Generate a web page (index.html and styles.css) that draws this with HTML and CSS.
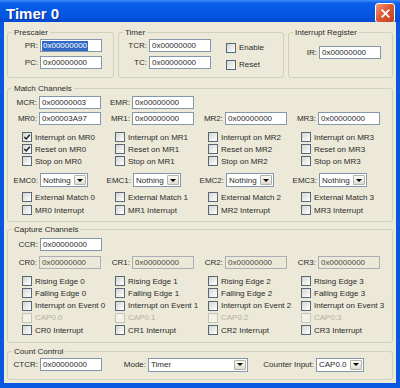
FILE: index.html
```html
<!DOCTYPE html>
<html lang="en">
<head>
  <meta charset="UTF-8" />
  <title>Timer 0</title>
  <link rel="stylesheet" href="styles.css">
</head>
<body>
  <div class="window">
    <div class="titlebar">
      <span class="title">Timer 0</span>
      <span class="close">
        <svg width="11" height="11" viewBox="0 0 10 10"><path d="M2 2 L8 8 M8 2 L2 8" stroke="#fff" stroke-width="1.7" stroke-linecap="round"/></svg>
      </span>
    </div>

    <div class="client">
      <!-- Fila superior -->
      <div class="top-row">
        <div class="group prescaler">
          <span class="caption">Prescaler</span>
          <div class="stack">
            <div class="field"><span class="lbl">PR:</span><span class="edit"><span class="sel">0x00000000</span></span></div>
            <div class="field"><span class="lbl">PC:</span><span class="edit">0x00000000</span></div>
          </div>
        </div>

        <div class="group timer">
          <span class="caption">Timer</span>
          <div class="stack">
            <div class="field"><span class="lbl narrow">TCR:</span><span class="edit">0x00000000</span></div>
            <div class="field"><span class="lbl narrow">TC:</span><span class="edit">0x00000000</span></div>
          </div>
          <div class="timer-checks">
            <div class="check"><span class="cb"></span>Enable</div>
            <div class="check"><span class="cb"></span>Reset</div>
          </div>
        </div>

        <div class="group intreg">
          <span class="caption">Interrupt Register</span>
          <div class="field"><span class="lbl narrow">IR:</span><span class="edit">0x00000000</span></div>
        </div>
      </div>

      <!-- Canales de match -->
      <div class="group match">
        <span class="caption">Match Channels</span>
        <div class="grid4 regs">
          <div class="field"><span class="lbl">MCR:</span><span class="edit">0x00000003</span></div>
          <div class="field"><span class="lbl">EMR:</span><span class="edit">0x00000000</span></div>
          <div></div>
          <div></div>
          <div class="field"><span class="lbl">MR0:</span><span class="edit">0x00003A97</span></div>
          <div class="field"><span class="lbl">MR1:</span><span class="edit">0x00000000</span></div>
          <div class="field"><span class="lbl">MR2:</span><span class="edit">0x00000000</span></div>
          <div class="field"><span class="lbl">MR3:</span><span class="edit">0x00000000</span></div>
        </div>
        <div class="grid4 checks gap6">
          <div class="check ind"><span class="cb on"><svg width="8" height="8" viewBox="0 0 8 8"><path d="M1.3 4 L3.2 6 L6.8 1.8" fill="none" stroke="#222" stroke-width="1.5"/></svg></span>Interrupt on MR0</div>
          <div class="check ind"><span class="cb"></span>Interrupt on MR1</div>
          <div class="check ind"><span class="cb"></span>Interrupt on MR2</div>
          <div class="check ind"><span class="cb"></span>Interrupt on MR3</div>
          <div class="check ind"><span class="cb on"><svg width="8" height="8" viewBox="0 0 8 8"><path d="M1.3 4 L3.2 6 L6.8 1.8" fill="none" stroke="#222" stroke-width="1.5"/></svg></span>Reset on MR0</div>
          <div class="check ind"><span class="cb"></span>Reset on MR1</div>
          <div class="check ind"><span class="cb"></span>Reset on MR2</div>
          <div class="check ind"><span class="cb"></span>Reset on MR3</div>
          <div class="check ind"><span class="cb"></span>Stop on MR0</div>
          <div class="check ind"><span class="cb"></span>Stop on MR1</div>
          <div class="check ind"><span class="cb"></span>Stop on MR2</div>
          <div class="check ind"><span class="cb"></span>Stop on MR3</div>
        </div>
        <div class="grid4 emc">
          <div class="field tall"><span class="lbl">EMC0:</span><span class="combo small">Nothing<span class="arrow"></span></span></div>
          <div class="field tall"><span class="lbl">EMC1:</span><span class="combo small">Nothing<span class="arrow"></span></span></div>
          <div class="field tall"><span class="lbl">EMC2:</span><span class="combo small">Nothing<span class="arrow"></span></span></div>
          <div class="field tall"><span class="lbl">EMC3:</span><span class="combo small">Nothing<span class="arrow"></span></span></div>
        </div>
        <div class="grid4 checks ext">
          <div class="check ind"><span class="cb"></span>External Match 0</div>
          <div class="check ind"><span class="cb"></span>External Match 1</div>
          <div class="check ind"><span class="cb"></span>External Match 2</div>
          <div class="check ind"><span class="cb"></span>External Match 3</div>
          <div class="check ind"><span class="cb"></span>MR0 Interrupt</div>
          <div class="check ind"><span class="cb"></span>MR1 Interrupt</div>
          <div class="check ind"><span class="cb"></span>MR2 Interrupt</div>
          <div class="check ind"><span class="cb"></span>MR3 Interrupt</div>
        </div>
      </div>

      <!-- Canales de captura -->
      <div class="group capture">
        <span class="caption">Capture Channels</span>
        <div class="field"><span class="lbl">CCR:</span><span class="edit">0x00000000</span></div>
        <div class="grid4 cr-row">
          <div class="field"><span class="lbl">CR0:</span><span class="edit ro">0x00000000</span></div>
          <div class="field"><span class="lbl">CR1:</span><span class="edit ro">0x00000000</span></div>
          <div class="field"><span class="lbl">CR2:</span><span class="edit ro">0x00000000</span></div>
          <div class="field"><span class="lbl">CR3:</span><span class="edit ro">0x00000000</span></div>
        </div>
        <div class="grid4 checks cap gap6">
          <div class="check ind"><span class="cb"></span>Rising Edge 0</div>
          <div class="check ind"><span class="cb"></span>Rising Edge 1</div>
          <div class="check ind"><span class="cb"></span>Rising Edge 2</div>
          <div class="check ind"><span class="cb"></span>Rising Edge 3</div>
          <div class="check ind"><span class="cb"></span>Falling Edge 0</div>
          <div class="check ind"><span class="cb"></span>Falling Edge 1</div>
          <div class="check ind"><span class="cb"></span>Falling Edge 2</div>
          <div class="check ind"><span class="cb"></span>Falling Edge 3</div>
          <div class="check ind"><span class="cb"></span>Interrupt on Event 0</div>
          <div class="check ind"><span class="cb"></span>Interrupt on Event 1</div>
          <div class="check ind"><span class="cb"></span>Interrupt on Event 2</div>
          <div class="check ind"><span class="cb"></span>Interrupt on Event 3</div>
          <div class="check ind dis"><span class="cb"></span>CAP0.0</div>
          <div class="check ind dis"><span class="cb"></span>CAP0.1</div>
          <div class="check ind dis"><span class="cb"></span>CAP0.2</div>
          <div class="check ind dis"><span class="cb"></span>CAP0.3</div>
          <div class="check ind"><span class="cb"></span>CR0 Interrupt</div>
          <div class="check ind"><span class="cb"></span>CR1 Interrupt</div>
          <div class="check ind"><span class="cb"></span>CR2 Interrupt</div>
          <div class="check ind"><span class="cb"></span>CR3 Interrupt</div>
        </div>
      </div>

      <!-- Control de conteo -->
      <div class="group count">
        <span class="caption">Count Control</span>
        <div class="field"><span class="lbl">CTCR:</span><span class="edit">0x00000000</span></div>
        <div class="field"><span class="lbl mode">Mode:</span><span class="combo wide">Timer<span class="arrow"></span></span></div>
        <div class="field"><span class="lbl counter">Counter Input:</span><span class="combo small">CAP0.0<span class="arrow"></span></span></div>
      </div>
    </div>
  </div>
</body>
</html>
```

FILE: styles.css
```css
:root {
  --face: #ece9d8;
  --frame: #0a58df;
  --group-line: #d0d0bf;
  --edit-border: #8497ab;
  --text: #2b2b2b;
}

* {
  box-sizing: border-box;
}

body {
  margin: 0;
  font-family: 'Liberation Sans', Arial, sans-serif;
  font-size: 8px;
  color: var(--text);
}

.window {
  width: 400px;
  height: 388px;
  background: var(--frame);
  display: flex;
  flex-direction: column;
}

.titlebar {
  height: 22px;
  flex: none;
  display: flex;
  padding: 0 5px 0 6px;
  background: linear-gradient(to bottom, #3f8cf8 0%, #0a5ee8 14%, #0558e6 50%, #0453dc 80%, #0449cc 100%);
}

.title {
  font-size: 15px;
  font-weight: bold;
  color: #fff;
  line-height: 28px;
  text-shadow: 1px 1px #0c2f9a;
}

.close {
  margin-left: auto;
  margin-top: 3px;
  width: 20px;
  height: 20px;
  border: 1px solid #fff;
  border-radius: 3px;
  background: linear-gradient(135deg, #f09a7c 0%, #df5a33 45%, #c2401e 100%);
  display: flex;
  align-items: center;
  justify-content: center;
}

.client {
  flex: 1;
  margin: 0 4px 5px;
  padding: 0 3px;
  background: var(--face);
}

/* Cajas de grupo */
.group {
  position: relative;
  border: 1px solid var(--group-line);
  border-radius: 3px;
}

.caption {
  position: absolute;
  top: -6px;
  left: 4px;
  padding: 0 2px;
  line-height: 11px;
  background: var(--face);
  white-space: nowrap;
}

.top-row {
  display: flex;
  gap: 4px;
  margin-top: 10px;
}

.prescaler {
  width: 107px;
  height: 46px;
  padding-top: 6px;
}

.timer {
  width: 166px;
  height: 46px;
  padding-top: 6px;
  display: flex;
}

.intreg {
  width: 105px;
  height: 46px;
  padding-top: 13px;
}

.stack {
  display: flex;
  flex-direction: column;
  gap: 4px;
}

.timer-checks {
  display: flex;
  flex-direction: column;
  gap: 4px;
  margin: 2px 0 0 15px;
}

.timer-checks .check {
  height: 13px;
}

/* Campos */
.field {
  display: flex;
  align-items: center;
  height: 13px;
}

.field.tall {
  height: 14px;
}

.lbl {
  width: 30px;
  margin-right: 2px;
  text-align: right;
  white-space: nowrap;
}

.lbl.narrow {
  width: 28px;
}

.lbl.mode {
  width: 44px;
}

.lbl.counter {
  width: 66px;
}

.edit {
  width: 62px;
  height: 13px;
  flex: none;
  border: 1px solid var(--edit-border);
  background: #fff;
  padding: 0 2px;
  line-height: 11px;
  white-space: nowrap;
  overflow: hidden;
}

.edit.ro {
  background: var(--face);
  border-color: #a8afb6;
  color: #4a4a4a;
}

.sel {
  display: inline-block;
  background: #316ac5;
  color: #fff;
  line-height: 10px;
  margin-left: -1px;
  padding: 0 1px;
}

.combo {
  height: 14px;
  flex: none;
  display: flex;
  align-items: center;
  border: 1px solid var(--edit-border);
  background: #fff;
  padding-left: 2px;
  white-space: nowrap;
}

.combo.small {
  width: 48px;
}

.combo.wide {
  width: 100px;
}

.arrow {
  margin-left: auto;
  margin-right: 1px;
  width: 12px;
  height: 10px;
  border: 1px solid #b2b2a6;
  border-radius: 1px;
  background: linear-gradient(to bottom, #fbfbf9, #dedcd2);
  display: flex;
  align-items: center;
  justify-content: center;
}

.arrow::after {
  content: "";
  border-left: 3px solid transparent;
  border-right: 3px solid transparent;
  border-top: 3px solid #000;
}

/* Casillas */
.check {
  display: flex;
  align-items: center;
  height: 12px;
  white-space: nowrap;
}

.check.ind {
  padding-left: 14px;
}

.check.dis {
  color: #b3b0a2;
}

.cb {
  width: 10px;
  height: 10px;
  flex: none;
  margin-right: 3px;
  border: 1px solid #56677a;
  background: linear-gradient(135deg, #d6d6ce, #ffffff);
  display: flex;
  align-items: center;
  justify-content: center;
}

.check.dis .cb {
  border-color: #c6c4b7;
  background: #f2f1ea;
}

/* Canales */
.grid4 {
  display: grid;
  grid-template-columns: repeat(4, 93px);
}

.match {
  height: 134px;
  margin-top: 10px;
  padding-top: 7px;
}

.regs {
  row-gap: 3px;
}

.gap6 {
  margin-top: 6px;
}

.emc {
  margin-top: 6px;
}

.ext {
  margin-top: 4px;
  row-gap: 1px;
}

.capture {
  height: 114px;
  margin-top: 7px;
  padding-top: 8px;
}

.cr-row {
  margin-top: 5px;
}

.cap .check {
  height: 12.25px;
}

.count {
  height: 29px;
  margin-top: 8px;
  padding-top: 6px;
  display: flex;
  align-items: flex-start;
}
```
